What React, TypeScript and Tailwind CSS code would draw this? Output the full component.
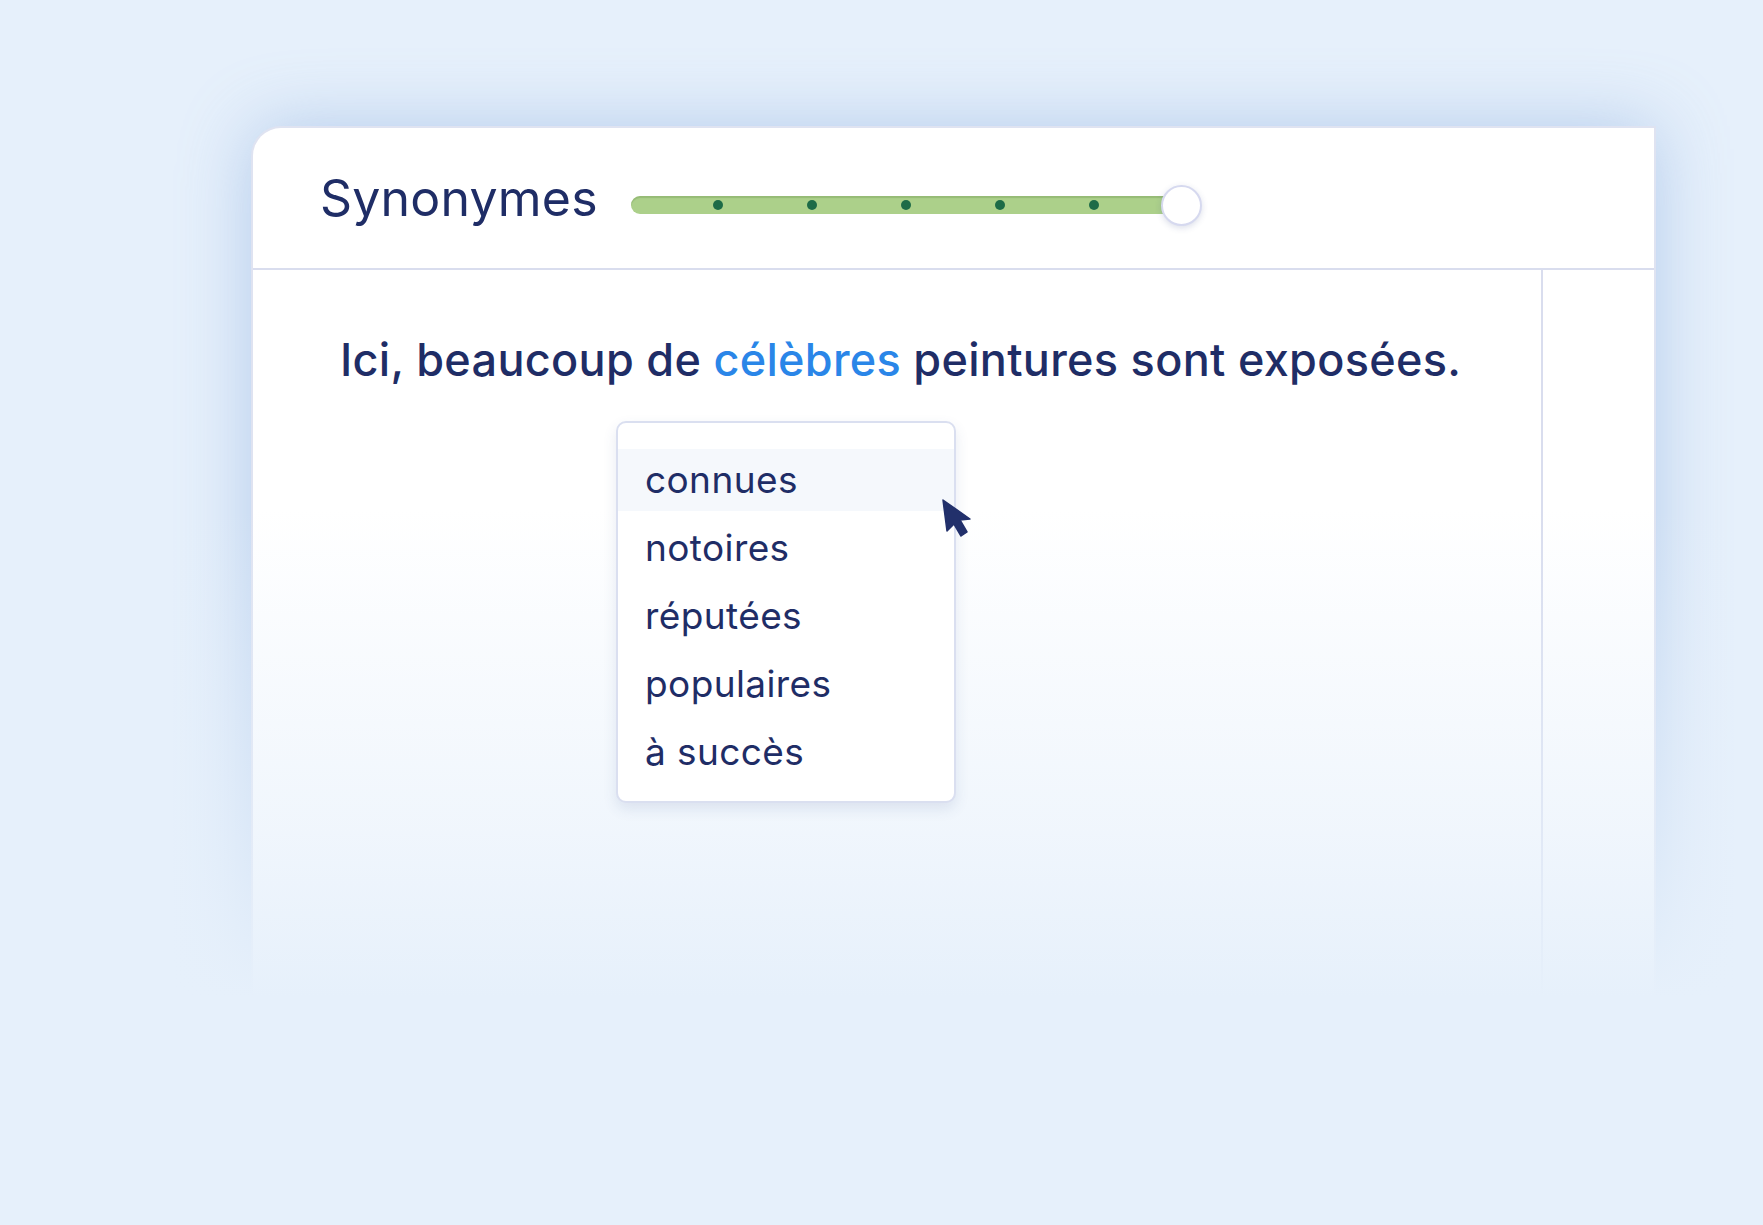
import React from "react";

const synonyms = ["connues", "notoires", "réputées", "populaires", "à succès"];

function Cursor() {
  return (
    <svg width="30" height="40" viewBox="0 0 30 40" className="absolute left-[326px] top-[78px] z-30">
      <polygon
        points="1,1 5,32 12,25 19,37 25,33 18,21 28,20"
        fill="#22306b"
        stroke="#22306b"
        strokeWidth="1.5"
        strokeLinejoin="round"
      />
    </svg>
  );
}

function Slider() {
  return (
    <div className="flex items-center mt-[14px]">
      <div className="flex items-center w-[559px] h-[18px] rounded-full bg-[#acd08a] shadow-[inset_0_2px_1px_rgba(110,150,80,0.35)] pl-[82px] gap-[84px]">
        {[0, 1, 2, 3, 4].map((i) => (
          <span key={i} className="block w-[10px] h-[10px] rounded-full bg-[#1d6b47]" />
        ))}
      </div>
      <div className="-ml-[29px] w-[41px] h-[41px] rounded-full bg-white border-2 border-[#d6d9ef] shadow-[0_2px_6px_rgba(60,80,140,0.18)]" />
    </div>
  );
}

export default function App() {
  return (
    <div className="w-full h-[1225px] overflow-hidden bg-[#e6f0fb] font-['Inter',sans-serif] text-[#1f2d66]">
      <div className="pl-[251px] pt-[126px]">
        <div className="relative w-[1405px] h-[900px] bg-white rounded-tl-[30px] border-2 border-b-0 border-[#dfe3f1] shadow-[0_0_70px_rgba(120,160,220,0.45)]">
          {/* header */}
          <div className="h-[142px] flex items-center pl-[67px] gap-[33px] border-b-2 border-[#d9ddee]">
            <h1 className="text-[50px] leading-none tracking-[0.2px]">Synonymes</h1>
            <Slider />
          </div>

          {/* body */}
          <div className="flex h-[756px]">
            <div className="w-[1290px] border-r-2 border-[#d9ddee] pl-[87px] pt-[61px]">
              <p className="text-[45px] font-medium leading-[58px] tracking-[0.3px] whitespace-nowrap">
                Ici, beaucoup de <span className="text-[#2a86e8]">célèbres</span> peintures sont exposées.
              </p>
              <div className="relative z-20 ml-[276px] mt-[32px] w-[340px]">
                <div className="rounded-[10px] border-2 border-[#dadff0] bg-white pt-[26px] pb-[18px] shadow-[0_6px_14px_rgba(60,80,140,0.12)] flex flex-col gap-[6px]">
                  {synonyms.map((s, i) => (
                    <div
                      key={s}
                      className={`h-[62px] flex items-center pl-[27px] text-[37px] tracking-[0.4px] ${i === 0 ? "bg-[#f5f8fc]" : ""}`}
                    >
                      {s}
                    </div>
                  ))}
                </div>
                <Cursor />
              </div>
            </div>
            <div className="flex-1" />
          </div>

          {/* fade out into the page background */}
          <div className="absolute z-10 -left-[120px] -right-[120px] top-[380px] h-[720px] bg-[linear-gradient(to_bottom,rgba(230,240,251,0)_0%,rgba(230,240,251,0.6)_45%,#e6f0fb_68%,#e6f0fb_100%)]" />
        </div>
      </div>
    </div>
  );
}
